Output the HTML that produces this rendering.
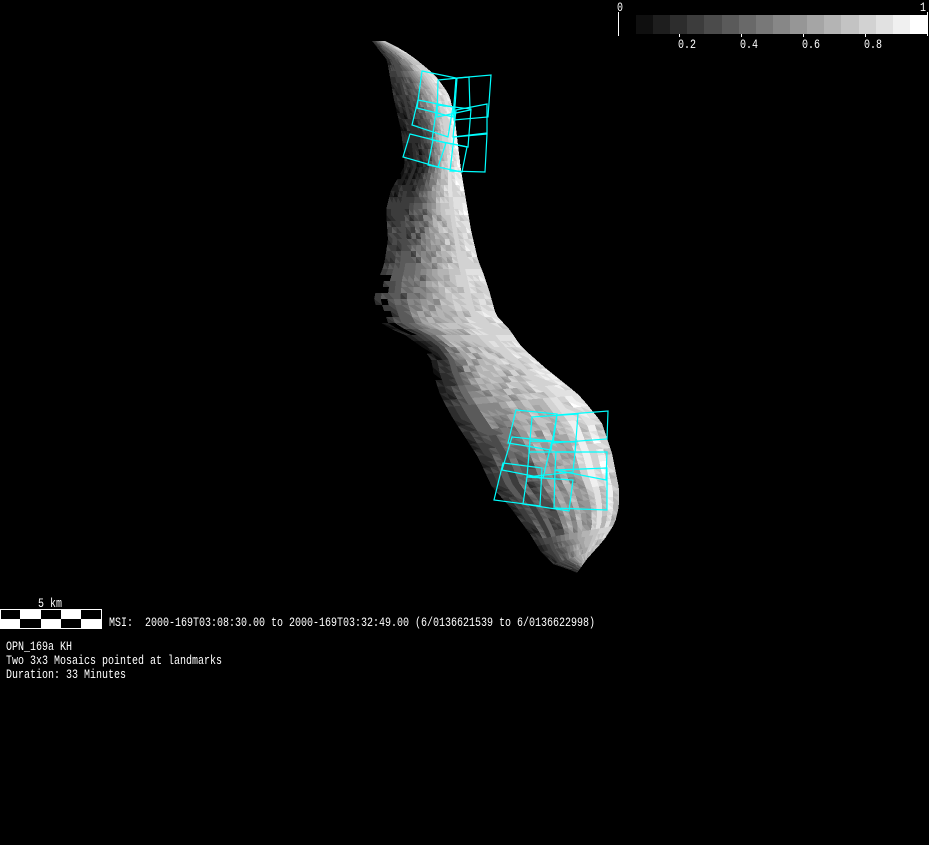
<!DOCTYPE html>
<html>
<head>
<meta charset="utf-8">
<style>
html,body{margin:0;padding:0;background:#000;width:929px;height:845px;overflow:hidden}
svg{display:block;position:absolute;left:0;top:0}
text{font-family:"Liberation Mono",monospace;font-size:13px;fill:#fff}
</style>
</head>
<body>
<svg id="s" width="929" height="845" viewBox="0 0 929 845" xmlns="http://www.w3.org/2000/svg">
<rect width="929" height="845" fill="#000"/>
<g id="mesh" shape-rendering="crispEdges"></g>
<g fill="none" stroke="#00ffff" stroke-width="1.2">
<polygon points="422,71 456,78 453,117 417,108"/>
<polygon points="438,80 469,77 470,110 437,117"/>
<polygon points="457,78 491,75 488,117 454,120"/>
<polygon points="418,100 453,107 448,137 412,125"/>
<polygon points="437,105 471,109 468,147 432,140"/>
<polygon points="456,110 487,104 487,133 453,137"/>
<polygon points="410,134 446,143 438,167 403,157"/>
<polygon points="433,140 467,147 462,172 428,165"/>
<polygon points="454,137 487,134 485,172 450,171"/>
<polygon points="516,410 557,414 551,450 508,443"/>
<polygon points="532,417 578,414 575,452 529,452"/>
<polygon points="557,415 608,411 607,439 553,443"/>
<polygon points="512,437 552,441 543,478 502,470"/>
<polygon points="530,441 576,442 573,472 527,477"/>
<polygon points="556,452 607,452 606,480 555,470"/>
<polygon points="503,463 542,468 540,506 494,500"/>
<polygon points="527,477 573,480 569,511 523,504"/>
<polygon points="555,470 607,468 607,510 554,508"/>
</g>
<g id="bar" shape-rendering="crispEdges"></g>
<g shape-rendering="crispEdges" fill="#fff">
<rect x="618" y="12" width="1" height="24"/>
<rect x="927" y="12" width="1" height="24"/>
<rect x="679" y="34" width="1" height="3"/>
<rect x="741" y="34" width="1" height="3"/>
<rect x="803" y="34" width="1" height="3"/>
<rect x="865" y="34" width="1" height="3"/>
<rect x="0" y="609" width="102" height="20"/>
<rect x="1" y="610" width="19" height="9" fill="#000"/>
<rect x="41" y="610" width="20" height="9" fill="#000"/>
<rect x="81" y="610" width="20" height="9" fill="#000"/>
<rect x="20" y="619" width="21" height="9" fill="#000"/>
<rect x="61" y="619" width="20" height="9" fill="#000"/>
</g>
<text x="617" y="11" textLength="6" lengthAdjust="spacingAndGlyphs">0</text>
<text x="920" y="11" textLength="6" lengthAdjust="spacingAndGlyphs">1</text>
<text x="678" y="48" textLength="18" lengthAdjust="spacingAndGlyphs">0.2</text>
<text x="740" y="48" textLength="18" lengthAdjust="spacingAndGlyphs">0.4</text>
<text x="802" y="48" textLength="18" lengthAdjust="spacingAndGlyphs">0.6</text>
<text x="864" y="48" textLength="18" lengthAdjust="spacingAndGlyphs">0.8</text>
<text x="38" y="607" textLength="24" lengthAdjust="spacingAndGlyphs">5 km</text>
<text x="109" y="626" textLength="486" lengthAdjust="spacingAndGlyphs" xml:space="preserve">MSI:  2000-169T03:08:30.00 to 2000-169T03:32:49.00 (6/0136621539 to 6/0136622998)</text>
<text x="6" y="650" textLength="66" lengthAdjust="spacingAndGlyphs">OPN_169a KH</text>
<text x="6" y="664" textLength="216" lengthAdjust="spacingAndGlyphs">Two 3x3 Mosaics pointed at landmarks</text>
<text x="6" y="678" textLength="120" lengthAdjust="spacingAndGlyphs">Duration: 33 Minutes</text>
</svg>
<script>
(function(){
var NS="http://www.w3.org/2000/svg";
function add(g,tag,a){var e=document.createElementNS(NS,tag);for(var k in a)e.setAttribute(k,a[k]);g.appendChild(e);}
var bar=document.getElementById("bar");
for(var i=0;i<17;i++){var v=15*(i+1);add(bar,"rect",{x:(636+i*17.12).toFixed(0),y:15,width:18,height:19,fill:"rgb("+v+","+v+","+v+")"});}
var Lt=[[41,372],[60,387],[100,394],[130,401],[165,405],[178,398],[190,391],[210,386],[240,388],[265,384],[280,378],[300,374],[325,382],[335,405],[347,422],[360,432],[370,433],[390,440],[410,452],[430,465],[450,478],[480,492],[500,510],[527,530],[545,541],[557,553],[562,568],[566,577]];
var Rt=[[41,385],[50,403],[60,417],[75,435],[90,446],[97,450],[120,455],[170,461],[200,466],[230,471],[260,478],[275,484],[290,489],[315,496],[330,510],[345,520],[370,545],[400,578],[430,602],[460,612],[495,619],[513,619],[530,615],[547,604],[557,595],[566,587]];
function lerp(t,y){for(var i=0;i<t.length-1;i++){if(y<=t[i+1][0]){var f=(y-t[i][0])/(t[i+1][0]-t[i][0]);return t[i][1]+f*(t[i+1][1]-t[i][1]);}}return t[t.length-1][1];}
var S=[
[41,[[0,50],[.2,70],[.4,110],[.7,170],[1,215]]],
[100,[[0,40],[.2,55],[.4,90],[.6,155],[.8,210],[1,240]]],
[130,[[0,30],[.3,45],[.5,85],[.7,185],[1,245]]],
[175,[[0,25],[.28,35],[.43,70],[.7,195],[1,245]]],
[230,[[0,60],[.25,80],[.45,125],[.65,190],[1,225]]],
[300,[[0,50],[.2,100],[.45,150],[.7,200],[1,220]]],
[340,[[0,10],[.15,50],[.35,175],[.7,205],[1,220]]],
[400,[[0,30],[.12,70],[.3,155],[.6,190],[.85,220],[1,240]]],
[470,[[0,40],[.2,80],[.4,130],[.7,190],[.9,235],[1,225]]],
[566,[[0,35],[.3,85],[.6,165],[1,190]]]];
function shade(y,u){
 var a=S[0],b=S[S.length-1];
 for(var i=0;i<S.length-1;i++){if(y<=S[i+1][0]){a=S[i];b=S[i+1];break;}}
 var f=Math.max(0,Math.min(1,(y-a[0])/(b[0]-a[0])));
 return lerp(a[1],u)*(1-f)+lerp(b[1],u)*f;
}
function sh(y){var t=Math.max(0,Math.min(1,(y-350)/60));return -14*t;}
var g=document.getElementById("mesh");
var cols=18,dy=6,j=0;
var stripe=[-30,8,26,-14,16,-22];
for(var y=41;y<566;y+=dy,j++){
 var y2=Math.min(566,y+dy);
 var l1=lerp(Lt,y),r1=lerp(Rt,y),l2=lerp(Lt,y2),r2=lerp(Rt,y2);
 var s1=sh(y),s2=sh(y2);
 for(var c=0;c<cols;c++){
  var u=(c+.5)/cols,u0=c/cols,u1=(c+1)/cols;
  var v=shade(y+dy/2,u);
  var h=(c*7+j*13+c*j*3)%11;
  if(y>265&&y<335&&u<.09&&h<6)continue;
  if(y>400&&y<530){
    var k=(y-400)/130;
    if(u>.12)v+=stripe[c%6]*(.6+.6*k);
    if((c+j)%2==0&&h<4&&y<480&&u>.12)v-=18;
  } else if(y>200&&y<=400&&u>.18&&u<.85){
    if((c+j)%2==0&&h<4)v-=26;
    else if(h==7)v+=12;
  } else {
    v+=(h-5)*1.5;
  }
  v=Math.max(0,Math.min(255,Math.round(v/15)*15));
  if(v==0)continue;
  var ax=l1+(r1-l1)*u0,ay=y+s1*(u0-.5),bx=l1+(r1-l1)*u1,by=y+s1*(u1-.5);
  var cx=l2+(r2-l2)*u1,cy=y2+s2*(u1-.5),dx=l2+(r2-l2)*u0,dyy=y2+s2*(u0-.5);
  var v2=Math.max(0,Math.min(255,v+((h%3)-1)*15));
  add(g,"polygon",{points:ax+","+ay+" "+bx+","+by+" "+cx+","+cy,fill:"rgb("+v+","+v+","+v+")"});
  add(g,"polygon",{points:ax+","+ay+" "+cx+","+cy+" "+dx+","+dyy,fill:"rgb("+v2+","+v2+","+v2+")"});
 }
}
})();
</script>
</body>
</html>
